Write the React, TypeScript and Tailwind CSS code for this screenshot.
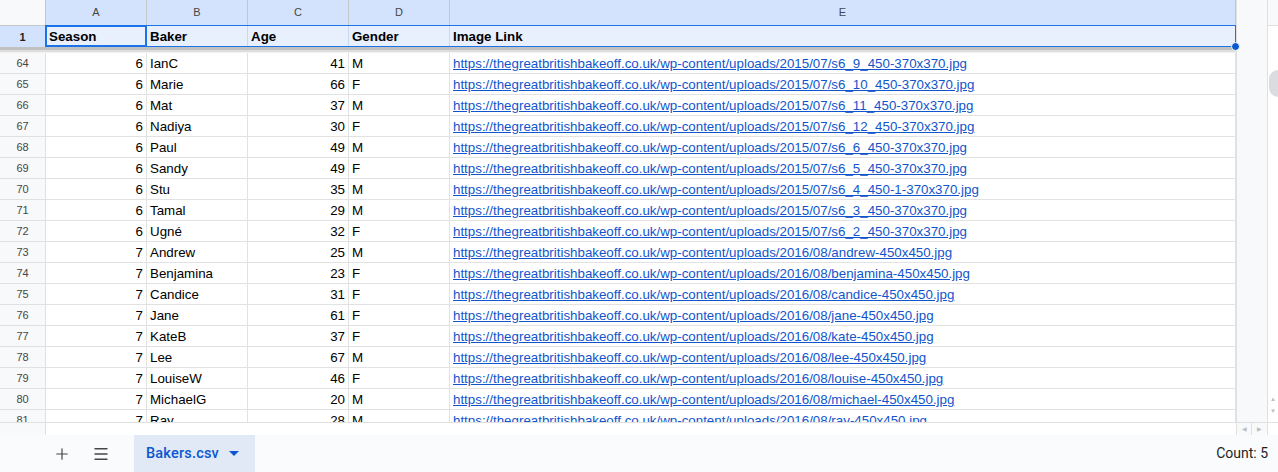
import { Plus, Menu } from 'lucide-react'

type BakerRow = {
  row: number
  season: number
  baker: string
  age: number
  gender: string
  link: string
}

const base = 'https://thegreatbritishbakeoff.co.uk/wp-content/uploads/'

const bakerRows: BakerRow[] = [
  { row: 64, season: 6, baker: 'IanC', age: 41, gender: 'M', link: base + '2015/07/s6_9_450-370x370.jpg' },
  { row: 65, season: 6, baker: 'Marie', age: 66, gender: 'F', link: base + '2015/07/s6_10_450-370x370.jpg' },
  { row: 66, season: 6, baker: 'Mat', age: 37, gender: 'M', link: base + '2015/07/s6_11_450-370x370.jpg' },
  { row: 67, season: 6, baker: 'Nadiya', age: 30, gender: 'F', link: base + '2015/07/s6_12_450-370x370.jpg' },
  { row: 68, season: 6, baker: 'Paul', age: 49, gender: 'M', link: base + '2015/07/s6_6_450-370x370.jpg' },
  { row: 69, season: 6, baker: 'Sandy', age: 49, gender: 'F', link: base + '2015/07/s6_5_450-370x370.jpg' },
  { row: 70, season: 6, baker: 'Stu', age: 35, gender: 'M', link: base + '2015/07/s6_4_450-1-370x370.jpg' },
  { row: 71, season: 6, baker: 'Tamal', age: 29, gender: 'M', link: base + '2015/07/s6_3_450-370x370.jpg' },
  { row: 72, season: 6, baker: 'Ugné', age: 32, gender: 'F', link: base + '2015/07/s6_2_450-370x370.jpg' },
  { row: 73, season: 7, baker: 'Andrew', age: 25, gender: 'M', link: base + '2016/08/andrew-450x450.jpg' },
  { row: 74, season: 7, baker: 'Benjamina', age: 23, gender: 'F', link: base + '2016/08/benjamina-450x450.jpg' },
  { row: 75, season: 7, baker: 'Candice', age: 31, gender: 'F', link: base + '2016/08/candice-450x450.jpg' },
  { row: 76, season: 7, baker: 'Jane', age: 61, gender: 'F', link: base + '2016/08/jane-450x450.jpg' },
  { row: 77, season: 7, baker: 'KateB', age: 37, gender: 'F', link: base + '2016/08/kate-450x450.jpg' },
  { row: 78, season: 7, baker: 'Lee', age: 67, gender: 'M', link: base + '2016/08/lee-450x450.jpg' },
  { row: 79, season: 7, baker: 'LouiseW', age: 46, gender: 'F', link: base + '2016/08/louise-450x450.jpg' },
  { row: 80, season: 7, baker: 'MichaelG', age: 20, gender: 'M', link: base + '2016/08/michael-450x450.jpg' },
  { row: 81, season: 7, baker: 'Ray', age: 28, gender: 'M', link: base + '2016/08/ray-450x450.jpg' }
]

const columnLetters = ['A', 'B', 'C', 'D', 'E']
const headerTitles = ['Season', 'Baker', 'Age', 'Gender', 'Image Link']

const gridCols = 'grid grid-cols-[46px_101px_101px_101px_101px_786px]'
const cell = 'h-[21px] border-r border-b border-[#e2e2e2] px-[3px] leading-[21px] text-[13.33px] text-black whitespace-nowrap overflow-hidden'

const App = () => {
  return (
    <div className="flex h-[472px] w-[1278px] flex-col overflow-hidden bg-white font-['Liberation_Sans',Arial,sans-serif]">
      <div className="flex h-[435px]">
        {/* sheet grid */}
        <div className="relative flex w-[1236px] flex-col">
          <div className={ gridCols + ' h-[26px]' }>
            <div className="border-r border-b border-[#c4c7c5] bg-[#f8f9fa]" />
            { columnLetters.map((letter) => (
              <div
                key={ letter }
                className="flex items-center justify-center border-r border-b border-[#c4c7c5] bg-[#d3e3fd] text-[11px] text-[#444746]"
              >
                { letter }
              </div>
            )) }
          </div>

          <div className={ gridCols + ' h-[21px]' }>
            <div className="flex items-center justify-center border-r border-[#c4c7c5] bg-[#d3e3fd] text-[11px] font-bold text-[#1f1f1f]">
              1
            </div>
            { headerTitles.map((title) => (
              <div key={ title } className="border-r border-[#c8d7f3] bg-[#e8f0fd] px-[3px] text-[13.33px] leading-[22px] font-bold text-black">
                { title }
              </div>
            )) }
          </div>

          <div className="flex h-[6px] flex-col">
            <div className="h-[3px] bg-[#c1c1c1]" />
            <div className="h-[2px] bg-[#dedede]" />
            <div className="h-[1px] bg-[#f1f1f1]" />
          </div>

          <div className="h-[369px] overflow-hidden">
            { bakerRows.map((item) => (
              <div key={ item.row } className={ gridCols }>
                <div className="flex h-[21px] items-center justify-center border-r border-b border-[#e0e0e0] bg-[#f8f9fa] text-[11px] text-[#444746]">
                  { item.row }
                </div>
                <div className={ cell + ' text-right' }>{ item.season }</div>
                <div className={ cell }>{ item.baker }</div>
                <div className={ cell + ' text-right' }>{ item.age }</div>
                <div className={ cell }>{ item.gender }</div>
                <div className={ cell }>
                  <span className="text-[#1155cc] underline">{ item.link }</span>
                </div>
              </div>
            )) }
          </div>

          <div className="flex h-[13px] border-t border-[#e0e0e0]">
            <div className="w-[46px] border-r border-[#e0e0e0] bg-[#f8f9fa]" />
          </div>

          {/* selection over row 1 */}
          <div className="pointer-events-none absolute top-[25px] left-[45px] h-[22px] w-[1191px] border border-[#1a73e8]" />
          <div className="pointer-events-none absolute top-[25px] left-[45px] h-[22px] w-[102px] border-2 border-[#1a73e8]" />
          <div className="absolute top-[42px] left-[1231px] h-[9px] w-[9px] rounded-full border border-white bg-[#0b57d0]" />
        </div>

        {/* gutter */}
        <div className="flex w-[32px] flex-col justify-end border-r border-l border-[#e0e0e0] bg-[#f8f9fa]">
          <div className="flex h-[13px] border-t border-[#e0e0e0]">
            <div className="flex w-[15px] items-center justify-center border-r border-[#e0e0e0] text-[6px] text-[#bdbdbd]">◀</div>
            <div className="flex w-[15px] items-center justify-center text-[6px] text-[#bdbdbd]">▶</div>
          </div>
        </div>

        {/* vertical scrollbar */}
        <div className="flex w-[10px] flex-col bg-white">
          <div className="h-[26px] border-b border-[#e0e0e0] bg-[#f8f9fa]" />
          <div className="flex-1 pt-[44px] pl-[1px]">
            <div className="h-[27px] w-[9px] rounded-l-full bg-[#dadce0]" />
          </div>
          <div className="flex h-[34px] flex-col items-center justify-center gap-[3px] text-[6px] text-[#bdbdbd]">
            <span>▲</span>
            <span>▼</span>
          </div>
          <div className="h-[13px] border-t border-[#e0e0e0]" />
        </div>
      </div>

      {/* sheet tabs bar */}
      <div className="flex h-[37px] items-center bg-[#f9fbfd] pr-[10px] font-['Roboto',Arial,sans-serif]">
        <div className="flex w-[81px] justify-center pl-[43px]">
          <Plus size={ 18 } strokeWidth={ 1.6 } className="text-[#444746]" />
        </div>
        <div className="flex w-[40px] justify-center">
          <Menu size={ 18 } strokeWidth={ 1.8 } className="text-[#444746]" />
        </div>
        <div className="ml-[13px] flex h-[37px] w-[121px] items-center gap-[10px] bg-[#e1e9f7] pl-[12px] text-[14.5px] font-medium tracking-[0.2px] text-[#0b57d0]">
          Bakers.csv
          <svg width="10" height="5" viewBox="0 0 10 5">
            <path d="M0 0 L10 0 L5 5 Z" fill="#0b57d0" />
          </svg>
        </div>
        <div className="ml-auto text-[14px] text-[#1f1f1f]">Count: 5</div>
      </div>
    </div>
  )
}

export default App
